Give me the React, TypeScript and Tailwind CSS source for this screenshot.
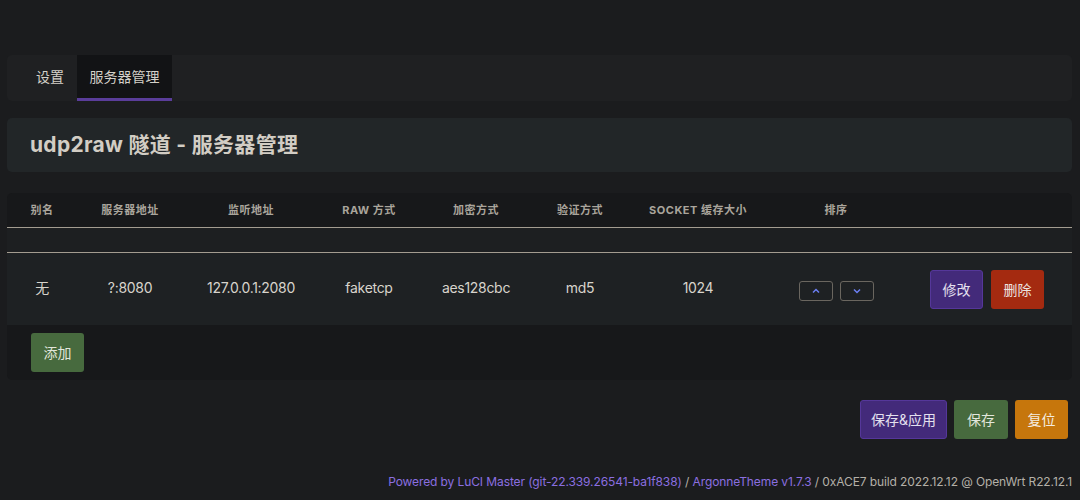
import React from "react";

const font = { fontFamily: 'Inter, "Noto Sans CJK SC", sans-serif' };

export default function App() {
  const cols = [70, 106, 136, 100, 114, 94, 142, 134];
  const headers = ["别名", "服务器地址", "监听地址", "RAW 方式", "加密方式", "验证方式", "SOCKET 缓存大小", "排序"];
  const values = ["无", "?:8080", "127.0.0.1:2080", "faketcp", "aes128cbc", "md5", "1024"];
  return (
    <div className="w-[1080px] h-[500px] bg-[#1b1c1e] overflow-hidden" style={font}>
      <div className="pt-[55px] pl-[7px] pr-[8px]">
        {/* Tabs */}
        <div className="h-[46px] bg-[#1f2022] rounded-[5px] flex pl-[29px]">
          <div className="flex items-center text-[14px] text-[#d4d0c8] pb-[3px]">设置</div>
          <div className="ml-[13px] w-[95px] flex items-center justify-center text-[14px] text-[#d4d0c8] bg-[#121315] border-b-[3px] border-[#5a3d9a]">服务器管理</div>
        </div>
        {/* Title */}
        <div className="mt-[17px] h-[54px] bg-[#222628] rounded-[5px] flex items-center pl-[23px]">
          <h2 className="text-[21px] font-bold text-[#d2cdc4] tracking-[0.3px]">udp2raw 隧道 - 服务器管理</h2>
        </div>
        {/* Table */}
        <div className="mt-[21px] bg-[#17181a] rounded-[5px] pb-[8px]">
          <div className="flex h-[35px] items-center border-b border-[#a39c90]">
            {headers.map((h, i) => (
              <div key={i} style={{ width: cols[i] }} className="text-center text-[11px] font-bold text-[#aaa59c] tracking-[0.5px]">{h}</div>
            ))}
          </div>
          <div className="h-[25px] bg-[#1d1f21] border-b border-[#a39c90]" />
          <div className="h-[72px] bg-[#1e2123] flex items-center">
            {values.map((v, i) => (
              <div key={i} style={{ width: cols[i] }} className="text-center text-[14px] tracking-[-0.3px] text-[#d8d4cc] pb-[3px]">{v}</div>
            ))}
            <div style={{ width: cols[7] }} className="flex justify-center gap-[7px] pt-[3px]">
              <button className="w-[34px] h-[20px] border border-[#6a665f] rounded-[3px] flex items-center justify-center">
                <svg width="8" height="6" viewBox="0 0 8 6"><path d="M1 4.5 L4 1.5 L7 4.5" stroke="#6b7ff2" strokeWidth="1.5" fill="none" /></svg>
              </button>
              <button className="w-[34px] h-[20px] border border-[#6a665f] rounded-[3px] flex items-center justify-center">
                <svg width="8" height="6" viewBox="0 0 8 6"><path d="M1 1.5 L4 4.5 L7 1.5" stroke="#6b7ff2" strokeWidth="1.5" fill="none" /></svg>
              </button>
            </div>
            <div className="flex-1 flex justify-end gap-[8px] pr-[28px]">
              <button className="w-[53px] h-[39px] rounded-[3px] bg-[#432a7a] border border-[#55379a] text-[14px] text-[#e4e0ee]">修改</button>
              <button className="w-[53px] h-[39px] rounded-[3px] bg-[#a42a10] text-[14px] text-[#ece4e0]">删除</button>
            </div>
          </div>
          <div className="pt-[8px] pl-[24px]">
            <button className="w-[53px] h-[39px] rounded-[3px] bg-[#476a3e] text-[14px] text-[#e2e6dc]">添加</button>
          </div>
        </div>
        {/* Bottom actions */}
        <div className="mt-[20px] flex justify-end gap-[7px] pr-[4px]">
          <button className="w-[87px] h-[39px] rounded-[3px] bg-[#432a7a] border border-[#55379a] text-[14px] text-[#e4e0ee]">保存&amp;应用</button>
          <button className="w-[54px] h-[39px] rounded-[3px] bg-[#476a3e] text-[14px] text-[#e2e6dc]">保存</button>
          <button className="w-[53px] h-[39px] rounded-[3px] bg-[#c6760c] text-[14px] text-[#f4ece0]">复位</button>
        </div>
        {/* Footer */}
        <div className="mt-[34px] text-right text-[12px] tracking-[-0.1px] text-[#b4b0a8] whitespace-nowrap">
          <span className="text-[#8b6fe0]">Powered by LuCI Master (git-22.339.26541-ba1f838)</span>
          {" / "}
          <span className="text-[#8b6fe0]">ArgonneTheme v1.7.3</span>
          {" / 0xACE7 build 2022.12.12 @ OpenWrt R22.12.1"}
        </div>
      </div>
    </div>
  );
}
